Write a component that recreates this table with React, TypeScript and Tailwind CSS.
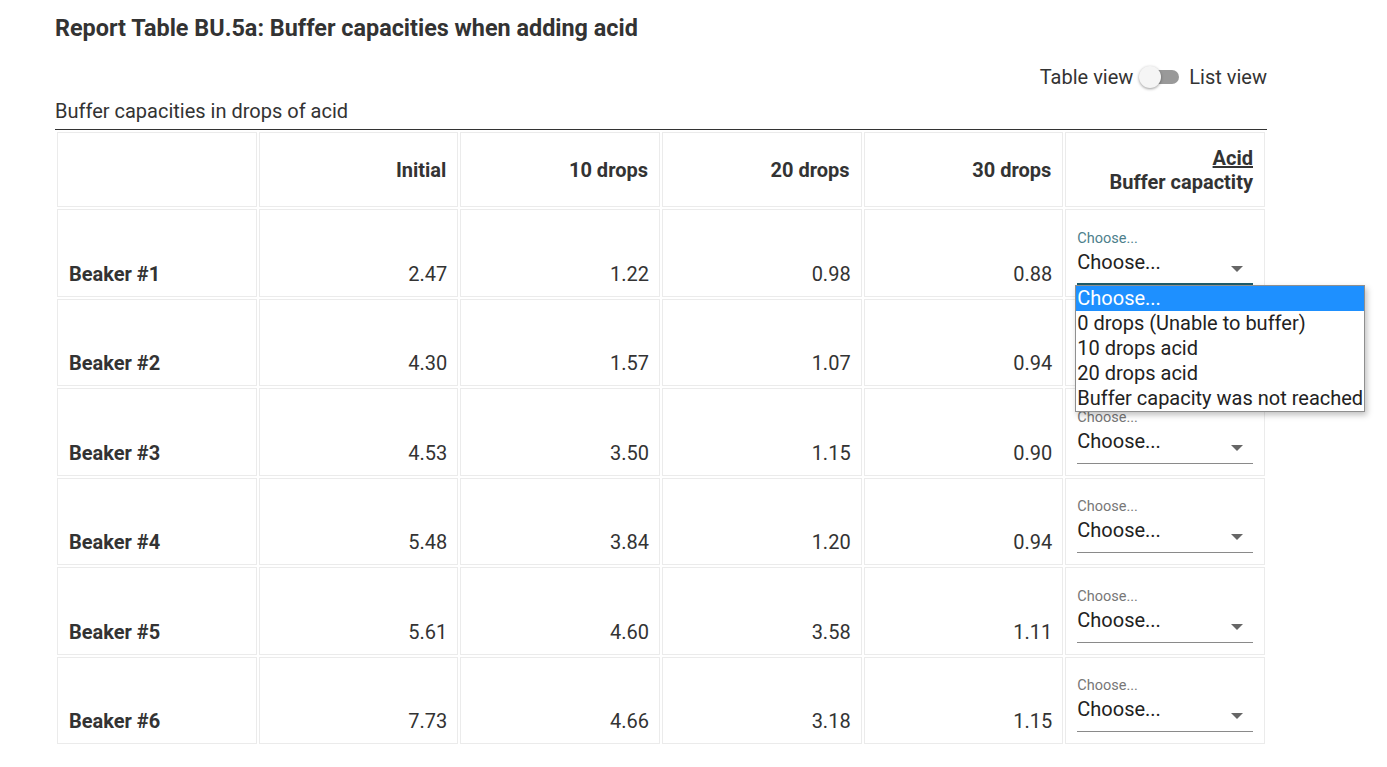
import React from 'react'

const cols = ['Initial', '10 drops', '20 drops', '30 drops']

const rows = [
  { name: 'Beaker #1', values: ['2.47', '1.22', '0.98', '0.88'] },
  { name: 'Beaker #2', values: ['4.30', '1.57', '1.07', '0.94'] },
  { name: 'Beaker #3', values: ['4.53', '3.50', '1.15', '0.90'] },
  { name: 'Beaker #4', values: ['5.48', '3.84', '1.20', '0.94'] },
  { name: 'Beaker #5', values: ['5.61', '4.60', '3.58', '1.11'] },
  { name: 'Beaker #6', values: ['7.73', '4.66', '3.18', '1.15'] },
]

const options = [
  'Choose...',
  '0 drops (Unable to buffer)',
  '10 drops acid',
  '20 drops acid',
  'Buffer capacity was not reached',
]

function Caret() {
  return (
    <svg width="12" height="6" viewBox="0 0 12 6" className="absolute right-[10px] top-[19px]">
      <path d="M0 0 L12 0 L6 6 Z" fill="#666" />
    </svg>
  )
}

function ChooseField({ focused, open }: { focused?: boolean; open?: boolean }) {
  return (
    <div className="relative">
      <div className={`h-[16px] text-[14.5px] leading-[16px] ${focused ? 'text-[#4d7f8c]' : 'text-[#777]'}`}>
        Choose...
      </div>
      <div
        className={`relative h-[38px] text-[20px] leading-[30px] text-[#222] ${
          focused ? 'border-b-2 border-[#1d5c6b]' : 'border-b border-[#8a8a8a]'
        }`}
      >
        Choose...
        <Caret />
      </div>
      {open && (
        <div className="absolute left-[-2px] top-[54px] z-10 w-[290px] border border-[#8f8f8f] bg-white shadow-[2px_3px_6px_rgba(0,0,0,0.25)]">
          {options.map((o, i) => (
            <div
              key={o}
              className={`h-[25px] whitespace-nowrap pl-[1px] text-[20px] leading-[25px] ${
                i === 0 ? 'bg-[#1e90ff] text-white' : 'text-[#222]'
              }`}
            >
              {o}
            </div>
          ))}
        </div>
      )}
    </div>
  )
}

export default function App() {
  return (
    <div className="min-h-screen bg-white pl-[55px] pt-[14px] font-['Roboto',sans-serif] text-[#333]">
      <div className="w-[1212px]">
        <h1 className="text-[23.4px] leading-[28px] font-bold text-[#333]">
          Report Table BU.5a: Buffer capacities when adding acid
        </h1>

        <div className="mt-[21px] flex items-center justify-end gap-[6px] text-[20px] leading-[28px] text-[#333]">
          <span>Table view</span>
          <div className="relative h-[22px] w-[44px]">
            <div className="absolute left-[6px] top-[4px] h-[14px] w-[34px] rounded-full bg-[#999]" />
            <div className="absolute left-0 top-0 h-[22px] w-[22px] rounded-full bg-[#f5f5f5] shadow-[0_1px_3px_rgba(0,0,0,0.4)]" />
          </div>
          <span>List view</span>
        </div>

        <div className="mt-[8px] border-b border-[#333] pb-[6px] text-[20px] leading-[24px] text-[#333]">
          Buffer capacities in drops of acid
        </div>

        <table className="w-full table-fixed border-separate border-spacing-[2px] text-[20px]">
          <thead>
            <tr>
              <th className="border border-[#ebebeb] px-[12px] py-[13px]" />
              {cols.map((c) => (
                <th
                  key={c}
                  className="border border-[#ebebeb] px-[11px] pb-[12px] pt-[13px] text-right text-[20px] leading-[24px] font-bold text-[#333]"
                >
                  {c}
                </th>
              ))}
              <th className="border border-[#ebebeb] px-[11px] pb-[12px] pt-[13px] text-right text-[20px] leading-[24px] font-bold text-[#333]">
                <div className="underline">Acid</div>
                <div>Buffer capactity</div>
              </th>
            </tr>
          </thead>
          <tbody>
            {rows.map((r, i) => (
              <tr key={r.name}>
                <td className="border border-[#ebebeb] px-[11px] pb-[10px] align-bottom text-[20px] leading-[24px] font-bold text-[#333]">
                  {r.name}
                </td>
                {r.values.map((v, j) => (
                  <td
                    key={j}
                    className="border border-[#ebebeb] px-[10px] pb-[10px] text-right align-bottom leading-[24px] text-[#333]"
                  >
                    {v}
                  </td>
                ))}
                <td className="border border-[#ebebeb] px-[11px] pb-[11px] pt-[20.5px] align-bottom">
                  <ChooseField focused={i === 0} open={i === 0} />
                </td>
              </tr>
            ))}
          </tbody>
        </table>
      </div>
    </div>
  )
}
